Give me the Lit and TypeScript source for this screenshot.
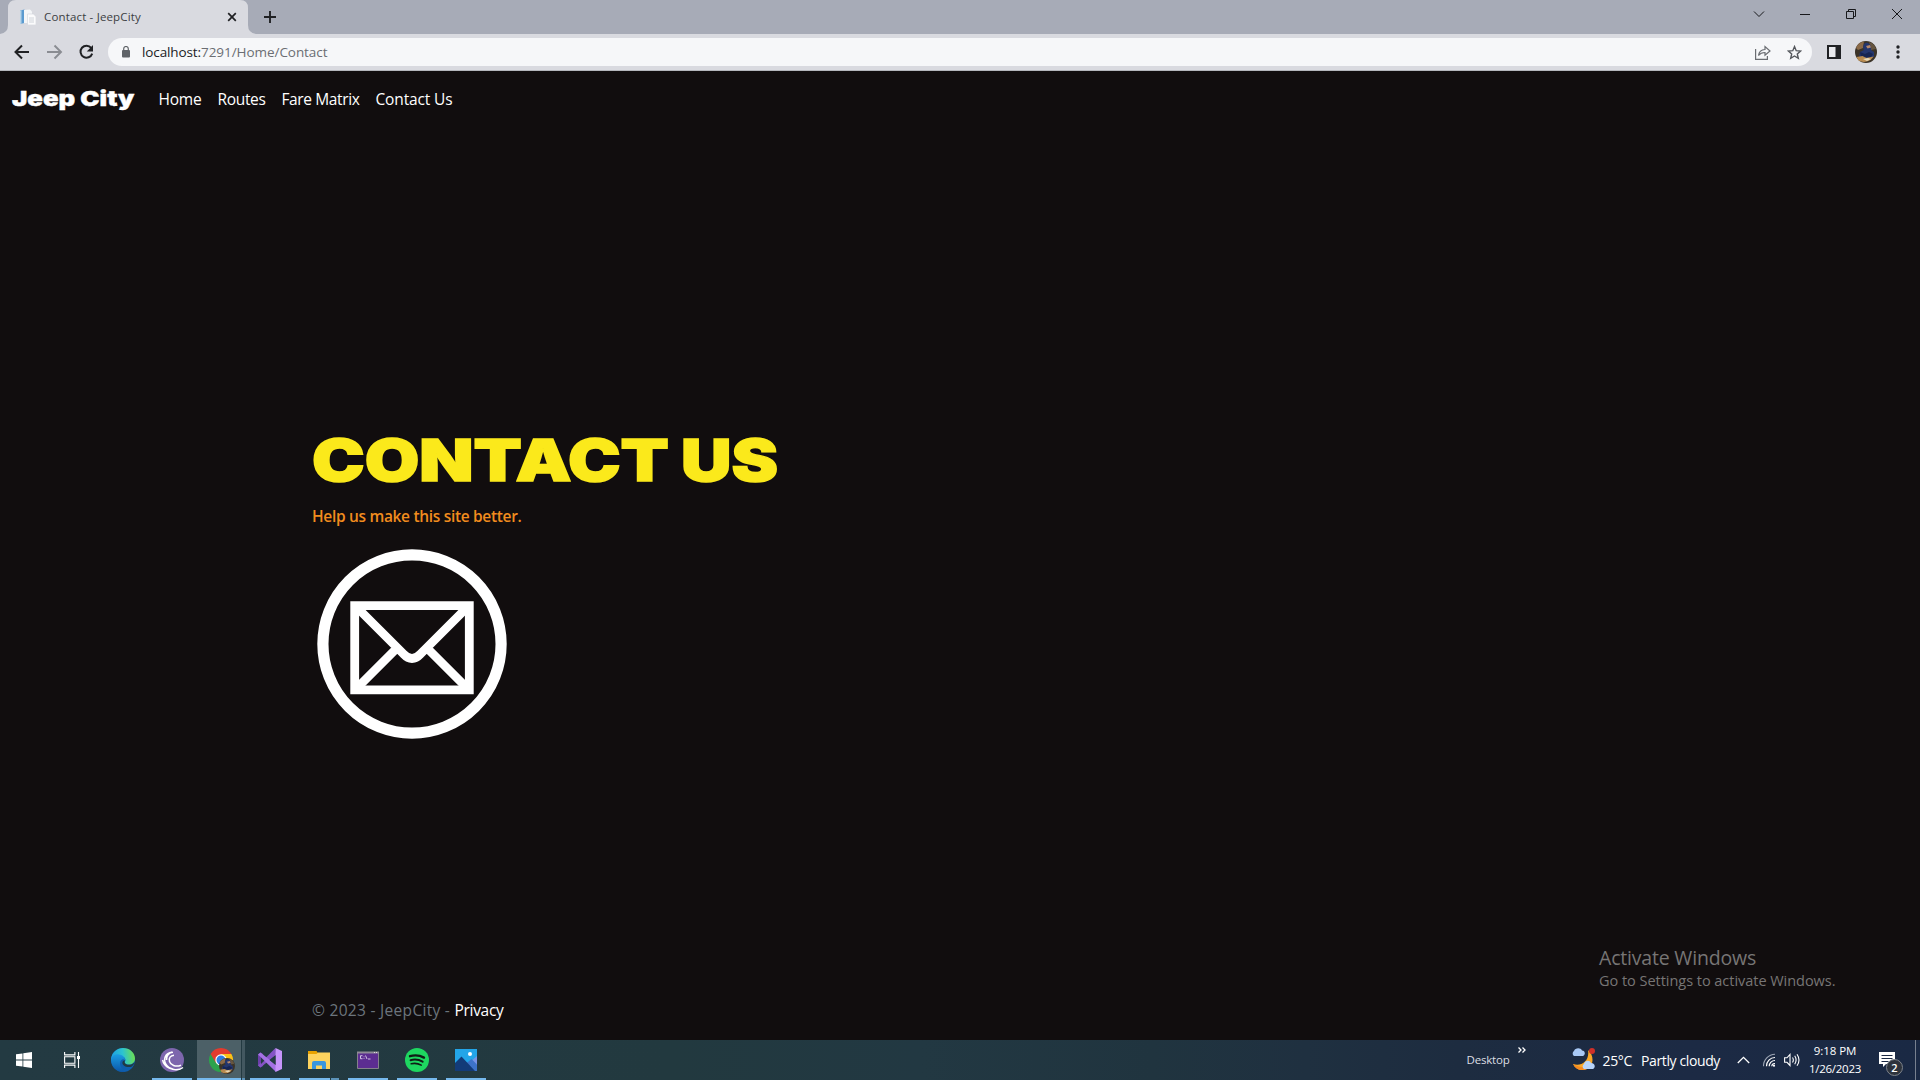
import { LitElement, html, css, svg } from "lit";
import { customElement, property, query } from "lit/decorators.js";

/** A line of text set to an exact measure, by tracking or by stretching. */
@customElement("fit-text")
class FitText extends LitElement {
  @property({ type: Number }) width = 0;
  @property({ type: Boolean }) stretch = false;
  @query("span") line!: HTMLSpanElement;

  static styles = css`
    :host { display: block; flex: none; white-space: pre; }
    span { display: inline-block; transform-origin: 0 50%; }
  `;

  firstUpdated() {
    const natural = this.line.getBoundingClientRect().width;
    const count = (this.textContent || "").length;
    this.style.width = this.width + "px";
    if (this.stretch) this.line.style.transform = `scaleX(${this.width / natural})`;
    else this.line.style.letterSpacing = (this.width - natural) / count + "px";
  }

  render() {
    return html`<span><slot></slot></span>`;
  }
}

const avatar = svg`
  <circle cx="11" cy="11" r="11" fill="#3b3328"/>
  <path d="M1 7a11 11 0 0 1 8-6.800L8 7 3 9z" fill="#8b6a48"/>
  <path d="M14 1a11 11 0 0 1 7 7l-5 1z" fill="#675640"/>
  <path d="M8 6q1-5 5-4 4 2 3 7l3 2v5l-8 1-7-1 1-5 4-2z" fill="#24366e"/>
  <path d="M11 5l4-1 1 2.500-3.500 1z" fill="#b88a6b"/>
  <path d="M5 11l5 2 4-2 4 2-2 3H6z" fill="#172552"/>
  <path d="M1.500 16l6-1 4 2 7-1.500a11 11 0 0 1-15 4z" fill="#b98b50"/>
  <path d="M8 18l5-1 3 1-4 2z" fill="#e7d9b8"/>`;

@customElement("browser-chrome")
class BrowserChrome extends LitElement {
  static styles = css`
    :host { display: block; font-family: "Open Sans", "Noto Sans", sans-serif; }
    svg { display: block; flex: none; }
    .strip { display: flex; height: 34px; background: #a7abb7; align-items: flex-start; }
    .tab { box-sizing: border-box; display: flex; align-items: center; width: 256px; height: 34px; position: relative; padding-left: 20px; }
    .shape { position: absolute; left: 0; top: 0; }
    .row { position: relative; display: flex; align-items: center; width: 236px; }
    .title { font-size: 11.5px; line-height: 16px; color: #3c4043; margin-left: 8px; }
    .closer { margin-left: 86px; }
    .plus { margin: 11px 0 0 8px; }
    .window { display: flex; margin-left: auto; }
    .bar { box-sizing: border-box; display: flex; align-items: center; height: 37px; background: #d9dae0; border-bottom: 1px solid #b4b6bc; }
    .nav { display: flex; gap: 16.5px; padding-left: 14px; width: 94px; }
    .omni { display: flex; align-items: center; width: 1704px; height: 28px; border-radius: 14px; background: #f6f7f9; }
    .lock { margin: 0 11px 0 13px; }
    .url { display: flex; font-size: 13.5px; line-height: 20px; color: #202124; }
    .path { color: #6b6e73; }
    .share { margin-left: auto; margin-right: 16px; }
    .star { margin-right: 10px; }
    .side { margin-left: 15px; }
    .user { margin-left: 14px; }
    .dots { margin-left: 19px; }
  `;

  render() {
    return html`
      <div class="strip">
        <div class="tab">
          <svg class="shape" width="256" height="34"><path d="M0 34Q8 33 8 25V8Q8 0 16 0H240Q248 0 248 8V25Q248 33 256 34Z" fill="#d9dae0"/></svg>
          <div class="row">
            <svg width="16" height="16" viewBox="0 0 16 16">
              <path d="M0 1.500l4.500-1V14L0 15z" fill="#5b9bd0"/><path d="M0 1.500l1.500-.3V14.700L0 15z" fill="#b8d4e8"/>
              <path d="M4 1l6-.5 2 2V14H4z" fill="#f4f6f8"/><path d="M7.500 5h6l2.500 2.500V16H7.500z" fill="#fbfbfc" stroke="#d0d4da" stroke-width=".6"/>
              <path d="M9 9h5M9 11h5M9 13h5" stroke="#c6cbd2" stroke-width=".8"/>
            </svg>
            <fit-text class="title" width="97">Contact - JeepCity</fit-text>
            <svg class="closer" width="10" height="10" viewBox="0 0 10 10"><path d="M1.200 1.200l7.600 7.600M8.800 1.200L1.200 8.800" stroke="#1f2023" stroke-width="1.700"/></svg>
          </div>
        </div>
        <svg class="plus" width="12" height="12" viewBox="0 0 12 12"><path d="M6 0v12M0 6h12" stroke="#202124" stroke-width="1.900"/></svg>
        <svg class="window" width="172" height="28" viewBox="1748 0 172 28" fill="none" stroke="#17181b" stroke-width="1">
          <path d="M1754 11.500l5 5 5-5"/><path d="M1800 14.500h10"/>
          <path d="M1846.500 11.500h7v7h-7zM1848.500 11.500v-2h7v7h-2"/><path d="M1892 9l10 10M1902 9l-10 10"/>
        </svg>
      </div>
      <div class="bar">
        <div class="nav">
          <svg width="16" height="16" viewBox="0 0 16 16" fill="none" stroke="#202124" stroke-width="2"><path d="M15 8H2.200M8 1.500L1.500 8 8 14.500"/></svg>
          <svg width="16" height="16" viewBox="0 0 16 16" fill="none" stroke="#8a8c92" stroke-width="1.900"><path d="M0 8h13.500M7.500 1.500L14 8l-6.500 6.500"/></svg>
          <svg width="15" height="16" viewBox="0 0 15 16"><path d="M12.200 3.900A6 6 0 1 0 13.200 9.600" fill="none" stroke="#202124" stroke-width="2"/><path d="M14 1v6.500H7.800z" fill="#202124"/></svg>
        </div>
        <div class="omni">
          <svg class="lock" width="10" height="12" viewBox="0 0 10 12"><rect x="1" y="4" width="8" height="7.500" rx="1" fill="#5f6368"/><path d="M2.700 4.500V2.800a2.300 2.300 0 0 1 4.600 0v1.700" fill="none" stroke="#5f6368" stroke-width="1.200"/></svg>
          <div class="url"><fit-text width="59">localhost:</fit-text><fit-text class="path" width="126.5">7291/Home/Contact</fit-text></div>
          <svg class="share" width="16" height="15" viewBox="0 0 16 15" fill="none" stroke="#6a6d72" stroke-width="1.200"><path d="M.6 4v10.400h11.800V11M3.500 10.500C4 7 6 4.800 10 4.500V1.500l5 4.500-5 4.300V7.500C7 7.500 5 8.500 3.500 10.500z"/></svg>
          <svg class="star" width="15" height="15" viewBox="0 0 15 15"><path d="M7.500 1.600l1.700 4.100 4.400.4-3.300 2.900 1 4.300-3.800-2.300-3.800 2.300 1-4.300L1.400 6.100l4.400-.4z" fill="none" stroke="#54575c" stroke-width="1.400"/></svg>
        </div>
        <svg class="side" width="14" height="14" viewBox="0 0 14 14"><path d="M0 0h14v14H0z" fill="#202124"/><path d="M2 2h6.500v10H2z" fill="#e8e9ed"/></svg>
        <svg class="user" width="22" height="22" viewBox="0 0 22 22">${avatar}</svg>
        <svg class="dots" width="4" height="14" viewBox="0 0 4 14" fill="#202124"><circle cx="2" cy="2" r="1.700"/><circle cx="2" cy="7" r="1.700"/><circle cx="2" cy="12" r="1.700"/></svg>
      </div>`;
  }
}

@customElement("site-page")
class SitePage extends LitElement {
  static styles = css`
    :host { display: flex; flex-direction: column; height: 969px; background: #110d0e; font-family: "Open Sans", "Noto Sans", sans-serif; position: relative; }
    svg { display: block; flex: none; }
    .menu { display: flex; height: 55px; align-items: center; padding-left: 12px; color: #fff; font-size: 15.5px; line-height: 24px; }
    .brand { font: 900 20.5px/24px Inter, sans-serif; margin-right: 24px; -webkit-text-stroke: .4px #fff; }
    .item { margin-right: 16px; }
    .main { display: flex; flex-direction: column; flex: 1; padding: 299px 0 0 312px; }
    .heading { display: flex; gap: 12px; font: 900 58px/70px Inter, sans-serif; color: #fbe91b; -webkit-text-stroke: 1.5px #fbe91b; margin: 0; height: 70px; }
    .lead { font-size: 15.5px; font-weight: 600; line-height: 24px; color: #f28c1e; margin-top: 9px; }
    .mail { margin-top: 16px; }
    .footer { display: flex; height: 60px; align-items: center; padding-left: 312px; font-size: 15.5px; line-height: 24px; color: #6c757d; }
    .link { color: #fff; }
    .notice { position: absolute; left: 1599px; top: 874px; color: #777575; }
    .big { font-size: 19.5px; line-height: 26px; }
    .small { font-size: 14.5px; line-height: 20px; }
  `;

  render() {
    const items: [string, number][] = [["Home", 43], ["Routes", 48], ["Fare Matrix", 78], ["Contact Us", 77]];
    return html`
      <div class="menu">
        <fit-text class="brand" stretch width="122.5">Jeep City</fit-text>
        ${items.map(([name, width]) => html`<fit-text class="item" width=${width}>${name}</fit-text>`)}
      </div>
      <div class="main">
        <h1 class="heading"><fit-text stretch width="357">CONTACT</fit-text><fit-text stretch width="97">US</fit-text></h1>
        <fit-text class="lead" width="209.5">Help us make this site better.</fit-text>
        <svg class="mail" width="200" height="200" viewBox="0 0 200 200" fill="none" stroke="#fff">
          <circle cx="100" cy="100" r="89.100" stroke-width="11.200"/>
          <path d="M42.700 61.600h114.600v84.200H42.700z" stroke-width="8.800"/>
          <path d="M45 63.500L91.500 110Q100 119 108.500 110L155 63.500M45 144L85 104M155 144L115 104" stroke-width="8.800"/>
        </svg>
      </div>
      <div class="footer"><fit-text width="142.5">© 2023 - JeepCity - </fit-text><fit-text class="link" width="49">Privacy</fit-text></div>
      <div class="notice"><fit-text class="big" width="157">Activate Windows</fit-text><fit-text class="small" width="236.5">Go to Settings to activate Windows.</fit-text></div>`;
  }
}

@customElement("task-bar")
class TaskBar extends LitElement {
  static styles = css`
    :host { display: flex; height: 40px; background: linear-gradient(90deg, #233a42 0, #22393f 35%, #223842 48%, #20343f 60%, #1f3040 68%, #1d2c40 76%, #1c2a44 88%, #1a2944); color: #fff; font-family: "Open Sans", "Noto Sans", sans-serif; }
    svg { display: block; flex: none; }
    .app { box-sizing: border-box; display: flex; flex: none; align-items: center; justify-content: center; width: 49px; height: 40px; padding-right: 1px; background: linear-gradient(#76b9ed, #76b9ed) 4px bottom / 40px 2px no-repeat; }
    .idle { background: none; }
    .active { width: 44px; justify-content: flex-start; margin-right: 1px; padding: 2px 0 0 11px; background: linear-gradient(#76b9ed, #76b9ed) center bottom / 44px 2px no-repeat, #4c6067; }
    .stack { width: 3px; margin-right: 1px; height: 40px; background: linear-gradient(#5c93b9, #5c93b9) bottom / 3px 2px no-repeat, #435860; }
    .grouped { background: linear-gradient(90deg, #76b9ed 31px, transparent 31px, transparent 32px, #5c93b9 32px) 4px bottom / 40px 2px no-repeat; }
    .start { width: 48px; padding: 0; }
    .view { width: 48px; padding: 0; margin-right: 3px; }
    .tray { display: flex; flex: 1; justify-content: flex-end; align-items: center; }
    .desk { font-size: 11.5px; line-height: 16px; color: #dcdfe3; }
    .more { margin: 0 45px 20px 8px; }
    .temp { font-size: 14px; line-height: 20px; margin: 2px 0 0 8px; }
    .sky { margin: 2px 0 0 9px; font-size: 14px; line-height: 20px; }
    .icons { margin-left: 17px; }
    .clock { display: flex; flex-direction: column; align-items: center; gap: 2px; margin: 0 0 0 8px; font-size: 11.5px; line-height: 16px; }
    .note { margin: 8px 0 0 17px; }
    .edge { width: 1px; height: 40px; background: #77808f; margin: 0 4px 0 11px; }
    .count { font: 600 11px "Open Sans", sans-serif; }
  `;

  render() {
    return html`
      <div class="app idle start"><svg width="16" height="16" viewBox="0 0 16 16" fill="#fff"><path d="M0 2.300L6.500 1.400V7.600H0zM7.300 1.300L16 0v7.600H7.300zM0 8.400h6.500v6.200L0 13.700zM7.300 8.400H16V16l-8.700-1.300z"/></svg></div>
      <div class="app idle view"><svg width="17" height="16" viewBox="0 0 17 16" fill="none" stroke="#fff" stroke-width="1.100"><path d="M.6 0v2.900h10.300V0M.6 16v-2.900h10.300V16M.6 4.800h10.300v6.400H.6zM14.500 0v16"/><path d="M13 4h3v3h-3z" fill="#fff" stroke="none"/></svg></div>
      <div class="app idle"><svg width="24" height="24" viewBox="0 0 24 24">
        <defs><linearGradient id="e1" x1="0" y1=".5" x2="1" y2=".4"><stop stop-color="#1e9fe0"/><stop offset=".5" stop-color="#2cc3d0"/><stop offset="1" stop-color="#6fe04c"/></linearGradient>
        <linearGradient id="e2" x1="0" y1="0" x2="0" y2="1"><stop stop-color="#1b9de2"/><stop offset="1" stop-color="#0c57a8"/></linearGradient></defs>
        <circle cx="12" cy="12" r="12" fill="#0f5fae"/>
        <path d="M0 11C1 4 6 0 12 0c7 0 12 5 12 10.500 0 4-3 6-6.500 6-3 0-4.500-1.500-3.500-3 1.500-2-.5-5-4-5C5 8.500 2 9 0 13z" fill="url(#e1)"/>
        <path d="M0 11.500C1.500 7 5 6 8 6.400c3.500.4 6.500 3 6 5.600-2-2-5 0-5 3.500 0 4 3 7 6 8C8 25.500 0 20 0 11.500z" fill="url(#e2)"/>
        <path d="M14 12.200c-1.500 2.300 1 4.600 4 4.600 2 0 4-.8 5.200-2.300l.3.500c-1 1.800-2 3-3 3.700-5 1.500-10-1.500-9-4.700.5-1 1.500-1.700 2.500-1.800z" fill="#213a43"/>
      </svg></div>
      <div class="app"><svg width="24" height="24" viewBox="0 0 24 24" fill="none"><circle cx="12" cy="12" r="12" fill="#7d66ad"/><path d="M23 19.500C18 23.500 9 21.500 6 16.500 2.700 11 5.500 5 12 4.300M20.500 21C13 23.500 4 19 2.600 12M21 17.200C15.500 19.500 10.500 17 9.500 13.500 8.500 10 10.500 7.500 14 7.200M13 4.300C9 4.500 6 8 6.500 12" stroke="#fff" stroke-width="1.500"/></svg></div>
      <div class="app active"><svg width="28" height="28" viewBox="0 0 28 28">
        <path d="M13 13L2.600 7A12 12 0 0 0 13 25l5.200-9z" fill="#2da24d"/><path d="M13 7H23.400A12 12 0 0 1 13 25l5.200-9z" fill="#fbc116"/><path d="M2.600 7a12 12 0 0 1 20.800 0H13L8 16z" fill="#e33b2e"/>
        <circle cx="13" cy="13" r="5.700" fill="#fff"/><circle cx="13" cy="13" r="4.500" fill="#2f7de1"/><svg x="11" y="11" width="16" height="16" viewBox="0 0 22 22">${avatar}</svg>
      </svg></div><div class="stack"></div>
      <div class="app"><svg width="24" height="24" viewBox="0 0 24 24"><path d="M0 6.500L2.500 4.500 5 6v12l-2.500 1.500L0 17.500z" fill="#6b3fa8"/><path d="M0 17.500L17.500 0 18 7 2.500 19.500z" fill="#8553c5"/><path d="M3 8.500l4 3.500-4 4z" fill="#243b43"/><path d="M2.500 4.500L18 17v7L0 6.500z" fill="#a471e4"/><path d="M17.500 0L24 3v18l-6.500 3z" fill="#c795fa"/><path d="M17.500 7.200V17L11.500 12z" fill="#243b43"/></svg></div>
      <div class="app grouped"><svg width="22" height="20" viewBox="0 0 22 20"><path d="M0 1h8.500l1.500 2V7H0z" fill="#e8a200"/><path d="M0 4h8.500L10 2.500h12V19H0z" fill="#fdd35e"/><path d="M4 19v-6q0-2 2-2h10q2 0 2 2v6h-4v-3.500H8V19z" fill="#3a96dd"/></svg></div>
      <div class="app"><svg width="22" height="18" viewBox="0 0 22 18"><path d="M.5 1.500h21v16H.5z" fill="#5c2d91" stroke="#85818c"/><path d="M0 .5h22v2H0z" fill="#8f8b96"/><path d="M17 1.500h1m1 0h1" stroke="#ddd"/><path d="M5.500 4.700H3.500v3h2M7 5.500v.7M7 7.200v.7M8.500 4.500l1.500 3.500M11 8h2.500" stroke="#ddd2ea" fill="none" stroke-width=".9"/></svg></div>
      <div class="app"><svg width="24" height="24" viewBox="0 0 24 24" fill="none" stroke-linecap="round"><circle cx="12" cy="12" r="12" fill="#1ed760"/><path d="M5 8.200q7.500-2.100 14 1.400" stroke="#101d16" stroke-width="2.400"/><path d="M5.600 12.200q6.500-1.700 12 1.500" stroke="#101d16" stroke-width="2"/><path d="M6.200 15.800q5.500-1.200 10 1.300" stroke="#101d16" stroke-width="1.600"/></svg></div>
      <div class="app"><svg width="22" height="22" viewBox="0 0 22 22"><path d="M0 0h22v22H0z" fill="#23a5e8"/><path d="M14 14l8-7v15h-8z" fill="#7893e6"/><path d="M11 14.500l5.500-4.500 5.500 5.500V22H11z" fill="#3d73c9"/><path d="M0 14l6.500-6.500L20 22H0z" fill="#133b78"/><circle cx="15" cy="5" r="2" fill="#fff"/></svg></div>
      <div class="tray">
        <fit-text class="desk" width="43">Desktop</fit-text>
        <svg class="more" width="8" height="6" viewBox="0 0 8 6" fill="none" stroke="#fff" stroke-width="1.300"><path d="M.5.500L3 3 .5 5.500M4.500.5L7 3 4.500 5.500"/></svg>
        <svg width="24" height="24" viewBox="0 0 24 24"><path d="M17 2c8 7 5 20-6 20-4 0-7-2-9-6 8 3 17-3 15-14z" fill="#fba928"/><path d="M2 16c2 4 5 6 9 6 3 0 6-1 8-3-6 1-12 0-17-3z" fill="#f58a22"/><path d="M3 8a3 3 0 0 1 0-5C4-.5 10-.5 11 2.500c3 0 4 4 1 5.500z" fill="#a9c9f5"/><path d="M13 21a3 3 0 0 1 0-5c1-4 6-4 7-1 4 0 5 4.500 2 6z" fill="#b9d5fa"/><circle cx="21" cy="3" r="3" fill="#cf3029"/></svg>
        <fit-text class="temp" width="29.5">25°C</fit-text>
        <fit-text class="sky" width="79">Partly cloudy</fit-text>
        <svg class="icons" width="64" height="16" viewBox="0 0 64 16" fill="none" stroke="#fff" stroke-width="1.200">
          <path d="M.8 11L6.500 5.300 12.200 11" stroke-width="1.300"/>
          <path d="M26.500 14.200A11.800 11.800 0 0 1 38 2.200" stroke="#9ca5b4" stroke-width="1.100"/><path d="M29.500 14.200A8.500 8.500 0 0 1 38 5.500M32.200 14.200A5.800 5.800 0 0 1 38 8.500M34.800 14.200A3 3 0 0 1 38 11.500" stroke-width="1.200"/><circle cx="37" cy="13.700" r="1.100" fill="#fff" stroke="none"/>
          <path d="M47.600 5.800H50L53 2.500v11L50 10.300H47.600zM55.500 5.500Q57.200 8 55.500 10.500M57.700 3.800Q60.500 8 57.700 12.200M60 2.200Q64 8 60 13.800" stroke-width="1.100"/>
        </svg>
        <div class="clock"><fit-text width="42.5">9:18 PM</fit-text><fit-text width="52">1/26/2023</fit-text></div>
        <svg class="note" width="26" height="26" viewBox="0 0 26 26"><path d="M1 1h16v12H8l-3 3v-3H1z" fill="#fff"/><path d="M3.500 4.500h11M3.500 7.500h11M3.500 10.500h7" stroke="#1b2944"/><circle cx="16.500" cy="16.500" r="8" fill="#2d333c" stroke="#7d838b"/><text class="count" x="16.500" y="20.500" text-anchor="middle" fill="#fff">2</text></svg>
        <div class="edge"></div>
      </div>`;
  }
}

@customElement("app-root")
class AppRoot extends LitElement {
  static styles = css`
    :host { display: flex; flex-direction: column; width: 1920px; height: 1080px; overflow: hidden; }
  `;

  render() {
    return html`<browser-chrome></browser-chrome><site-page></site-page><task-bar></task-bar>`;
  }
}
